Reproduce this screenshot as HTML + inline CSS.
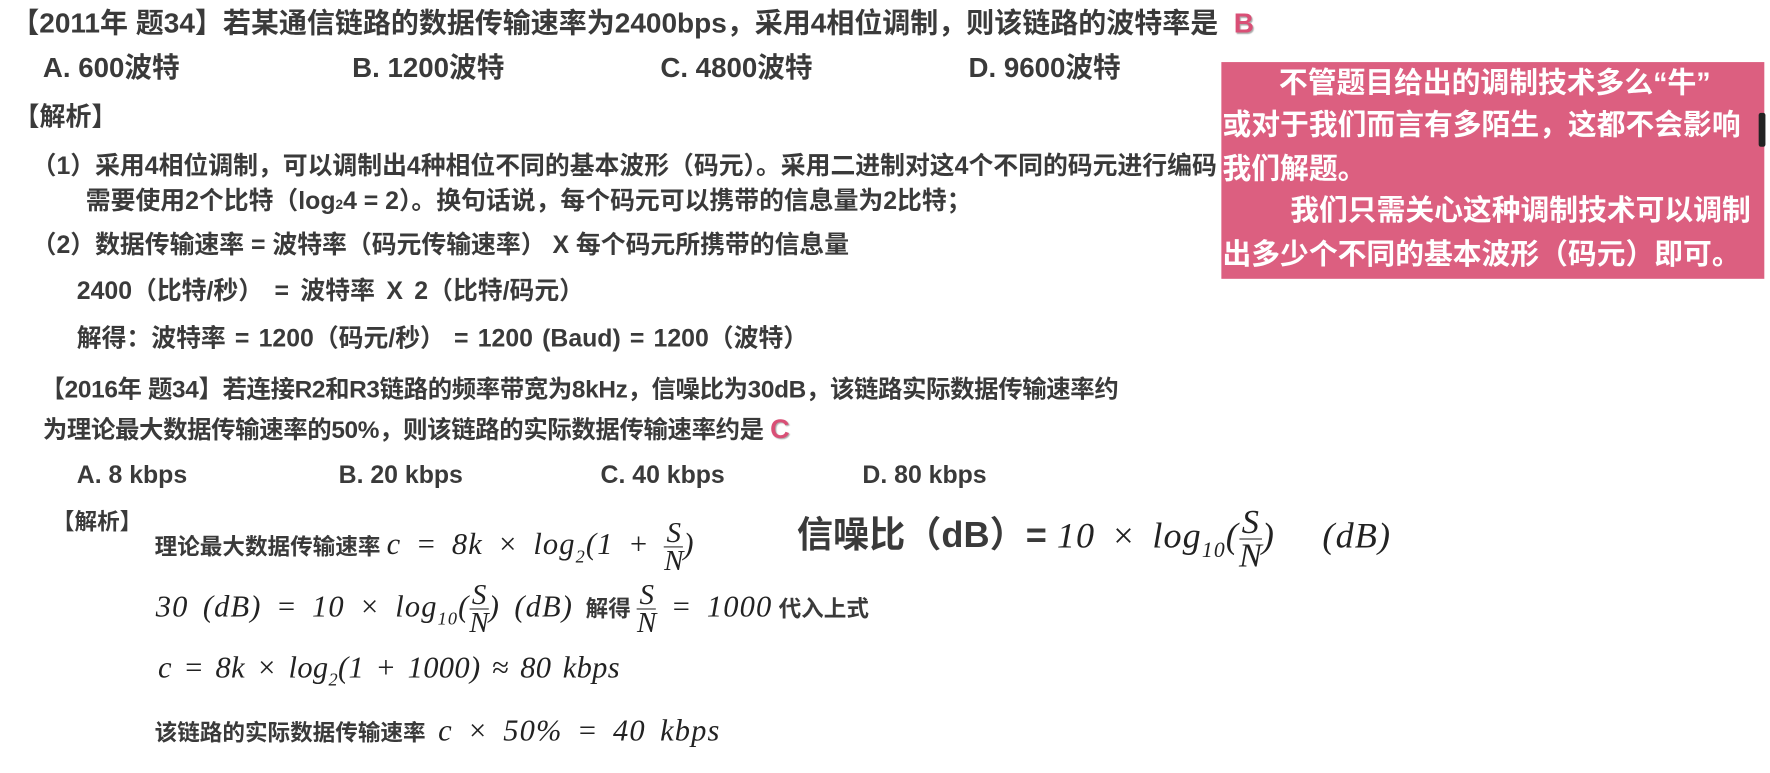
<!DOCTYPE html>
<html><head><meta charset="utf-8">
<style>
html,body{margin:0;padding:0;background:#fff;width:1770px;height:773px;overflow:hidden}
#w{position:absolute;left:0;top:0;width:1568px;height:685px;transform:scale(1.1288);transform-origin:0 0}
.t{position:absolute;white-space:nowrap;color:#3a3a3a;font-family:"Liberation Sans","Noto Sans CJK SC",sans-serif;font-weight:bold;line-height:1}
.m{font-family:"Liberation Serif",serif;font-style:italic;font-weight:normal;color:#222;word-spacing:5px;letter-spacing:1px}
.fr{display:inline-block;vertical-align:middle;text-align:center;line-height:0.95;font-size:0.95em;letter-spacing:0}
.fr span{display:block}
.fr span:first-child{border-bottom:1px solid #333}
sub{font-size:0.6em;vertical-align:-0.45em}
.box{position:absolute;left:1082px;top:55px;width:481px;height:192px;background:#dc5f80}
.bt{position:absolute;color:#fff;font-family:"Liberation Sans","Noto Sans CJK SC",sans-serif;font-weight:bold;font-size:25.5px;white-space:nowrap;line-height:1}
.ans{color:#d94f76;text-shadow:1px 1px 1px #aaa}
</style></head><body><div id="w">
<div class="t" style="left:10px;top:10px;font-size:24.8px">【2011年 题34】若某通信链路的数据传输速率为2400bps，采用4相位调制，则该链路的波特率是 &nbsp;<span class="ans">B</span></div>
<div class="t" style="left:38px;top:49px;font-size:24.5px">A. 600波特</div>
<div class="t" style="left:312px;top:49px;font-size:24.5px">B. 1200波特</div>
<div class="t" style="left:585px;top:49px;font-size:24.5px">C. 4800波特</div>
<div class="t" style="left:858px;top:49px;font-size:24.5px">D. 9600波特</div>
<div class="t" style="left:12px;top:92px;font-size:23px">【解析】</div>
<div class="t" style="left:28px;top:136px;font-size:22px">（1）采用4相位调制，可以调制出4种相位不同的基本波形（码元）。采用二进制对这4个不同的码元进行编码</div>
<div class="t" style="left:76px;top:167px;font-size:22px">需要使用2个比特（log<span style="font-size:12px">2</span>4 = 2）。换句话说，每个码元可以携带的信息量为2比特；</div>
<div class="t" style="left:28px;top:206px;font-size:22px">（2）数据传输速率 = 波特率（码元传输速率） X  每个码元所携带的信息量</div>
<div class="t" style="left:68px;top:247px;font-size:22px;word-spacing:4px">2400（比特/秒） = 波特率  X  2（比特/码元）</div>
<div class="t" style="left:68px;top:289px;font-size:22px;word-spacing:2px">解得：波特率 = 1200（码元/秒） = 1200 (Baud) = 1200（波特）</div>
<div class="t" style="left:36px;top:334px;font-size:21.6px;letter-spacing:-0.3px">【2016年 题34】若连接R2和R3链路的频率带宽为8kHz，信噪比为30dB，该链路实际数据传输速率约</div>
<div class="t" style="left:38px;top:369px;font-size:21.6px;letter-spacing:-0.3px">为理论最大数据传输速率的50%，则该链路的实际数据传输速率约是 <span class="ans" style="font-size:24px">C</span></div>
<div class="t" style="left:68px;top:410px;font-size:22px">A. 8 kbps</div>
<div class="t" style="left:300px;top:410px;font-size:22px">B. 20 kbps</div>
<div class="t" style="left:532px;top:410px;font-size:22px">C. 40 kbps</div>
<div class="t" style="left:764px;top:410px;font-size:22px">D. 80 kbps</div>
<div class="t" style="left:46px;top:453px;font-size:20px">【解析】</div>
<div class="t" style="left:137px;top:460px;font-size:20px">理论最大数据传输速率 <span class="m" style="font-size:27px">c = 8k × log<sub>2</sub>(1 + <span class="fr"><span>S</span><span>N</span></span>)</span></div>
<div class="t" style="left:706px;top:448px;font-size:32px">信噪比（dB）= <span class="m" style="font-size:32px">10 × log<sub>10</sub>(<span class="fr"><span>S</span><span>N</span></span>) &nbsp;&nbsp;(dB)</span></div>
<div class="t" style="left:138px;top:515px;font-size:20px"><span class="m" style="font-size:27px">30 (dB) = 10 × log<sub>10</sub>(<span class="fr"><span>S</span><span>N</span></span>) (dB)</span> &nbsp;解得 <span class="m" style="font-size:27px"><span class="fr"><span>S</span><span>N</span></span> = 1000</span> 代入上式</div>
<div class="t" style="left:140px;top:578px;font-size:27px"><span class="m" style="word-spacing:3px;letter-spacing:0.3px">c = 8k × log<sub>2</sub>(1 + 1000) ≈ 80 kbps</span></div>
<div class="t" style="left:137px;top:634px;font-size:20px">该链路的实际数据传输速率 &nbsp;<span class="m" style="font-size:27px">c × 50% = 40 kbps</span></div>
<div class="box"></div>
<div class="bt" style="left:1133px;top:62px">不管题目给出的调制技术多么“牛”</div>
<div class="bt" style="left:1083px;top:99px">或对于我们而言有多陌生，这都不会影响</div>
<div class="bt" style="left:1083px;top:138px">我们解题。</div>
<div class="bt" style="left:1143px;top:175px">我们只需关心这种调制技术可以调制</div>
<div class="bt" style="left:1083px;top:214px">出多少个不同的基本波形（码元）即可。</div>
<div style="position:absolute;left:1558px;top:100px;width:6px;height:30px;background:#222;border-radius:2px"></div>
</div></body></html>
